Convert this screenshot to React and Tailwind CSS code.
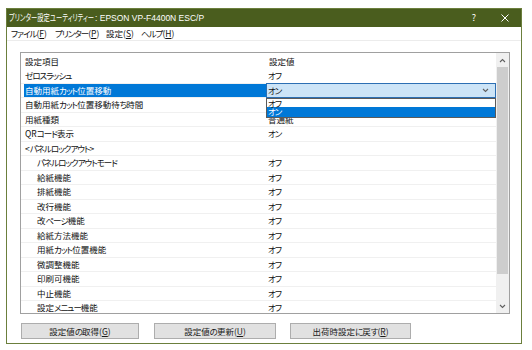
import React from "react";

const ROWS = [
  { label: "ゼロスラッシュ", value: "オフ" },
  { label: "自動用紙カット位置移動", value: "オン", selected: true },
  { label: "自動用紙カット位置移動待ち時間", value: "" },
  { label: "用紙種類", value: "普通紙" },
  { label: "QRコード表示", value: "オン" },
  { label: "<パネルロックアウト>", value: "" },
  { label: "パネルロックアウトモード", value: "オフ", indent: true },
  { label: "給紙機能", value: "オフ", indent: true },
  { label: "排紙機能", value: "オフ", indent: true },
  { label: "改行機能", value: "オフ", indent: true },
  { label: "改ページ機能", value: "オフ", indent: true },
  { label: "給紙方法機能", value: "オフ", indent: true },
  { label: "用紙カット位置機能", value: "オフ", indent: true },
  { label: "微調整機能", value: "オフ", indent: true },
  { label: "印刷可機能", value: "オフ", indent: true },
  { label: "中止機能", value: "オフ", indent: true },
  { label: "設定メニュー機能", value: "オフ", indent: true },
];

const MENUS = [
  ["ファイル", "F", "w-[44px]"],
  ["プリンター", "P", "w-[51px]"],
  ["設定", "S", "w-[35px]"],
  ["ヘルプ", "H", "w-[40px]"],
];

// kana in the original UI font are narrow, so squeeze kana runs a bit
function J({ text }) {
  return text.split(/([\u3040-\u30ff]+)/).map((part, i) =>
    /[\u3040-\u30ff]/.test(part) ? (
      <span key={i} className="tracking-[-1px]">{part}</span>
    ) : (
      <span key={i}>{part}</span>
    )
  );
}

function Chevron({ up }) {
  return (
    <svg width="7" height="5" viewBox="0 0 7 5" className="block">
      <polyline
        points={up ? "1,4 3.5,1.5 6,4" : "1,1 3.5,3.5 6,1"}
        fill="none"
        stroke="#606060"
        strokeWidth="1.1"
      />
    </svg>
  );
}

function Row({ row }) {
  return (
    <div className="flex h-[14.5px] border-b border-[#f0f0f0]">
      <div className="w-[245px] pl-[3px] flex">
        <div
          className={`flex-1 flex items-center whitespace-nowrap ${row.indent ? "pl-[13px]" : "pl-[1px]"} ${
            row.selected ? "bg-[#0078d7] text-white" : ""
          }`}
        >
          <J text={row.label} />
        </div>
      </div>
      <div className="w-[230px] relative">
        {row.selected ? (
          <>
            <div className="h-[15px] -mt-[0.5px] flex items-center justify-between border border-[#2c6fb3] bg-[#cce4f7] pl-[1px] pr-[6px]">
              <span><J text={row.value} /></span>
              <Chevron />
            </div>
            <div className="absolute left-0 top-[14.5px] w-full z-10 border border-[#5a5a5a] bg-white leading-[8px]">
              <div className="h-[8px] pl-[1px]"><J text="オフ" /></div>
              <div className="h-[9.5px] pl-[1px] bg-[#0078d7] text-white"><J text="オン" /></div>
            </div>
          </>
        ) : (
          <div className="h-full flex items-center pl-[2px]"><J text={row.value} /></div>
        )}
      </div>
    </div>
  );
}

function Btn({ label, k, w, ml }) {
  return (
    <div
      className={`${w} ${ml} h-[16px] flex items-center justify-center whitespace-nowrap bg-[#e1e1e1] border border-[#adadad] text-[#1a1a1a]`}
    >
      <J text={label} />(<span className="underline">{k}</span>)
    </div>
  );
}

export default function App() {
  return (
    <div className="w-[532px] h-[350px] bg-white pt-[8px] pl-[6px] text-[8.5px] text-[#111] [font-family:'Noto_Sans_CJK_JP',sans-serif] [font-feature-settings:'palt'_1] overflow-hidden">
      <div className="w-[516px] h-[336px] border border-[#6b7f3c] flex flex-col bg-white">
        {/* title bar */}
        <div className="h-[18px] bg-[#4a5d1e] text-white flex items-center pl-[2px] text-[9px]">
          <span className="inline-block w-[86px] shrink-0">
            <span className="inline-block origin-left scale-x-[0.7] whitespace-nowrap">プリンター設定ユーティリティー</span>
          </span>
          <span className="flex-1 whitespace-nowrap [font-family:'Liberation_Sans',sans-serif] text-[8.5px]">: EPSON VP-F4400N ESC/P</span>
          <span className="w-[10px] text-center mr-[22px]">?</span>
          <svg width="8" height="8" viewBox="0 0 8 8" className="mr-[12px]">
            <path d="M0.5 0.5 L7.5 7.5 M7.5 0.5 L0.5 7.5" stroke="white" strokeWidth="1" />
          </svg>
        </div>

        {/* menu bar */}
        <div className="h-[14px] flex items-center pl-[4px] border-b border-[#ececec]">
          {MENUS.map(([t, k, w]) => (
            <span key={k} className={`${w} shrink-0 whitespace-nowrap`}>
              <J text={t} />(<span className="underline">{k}</span>)
            </span>
          ))}
        </div>

        {/* list */}
        <div className="pl-[13px] pt-[11px]">
          <div className="w-[490px] h-[262px] border border-[#a0a0a0] flex">
            <div className="w-[475px] h-full overflow-hidden">
              <div className="h-[16px] flex items-center">
                <div className="w-[245px] pl-[4px]">設定項目</div>
                <div className="pl-[3px]">設定値</div>
              </div>
              {ROWS.map((r, i) => (
                <Row key={i} row={r} />
              ))}
            </div>
            <div className="w-[13px] h-full bg-[#f0f0f0] flex flex-col">
              <div className="h-[14px] flex items-center justify-center">
                <Chevron up />
              </div>
              <div className="h-[207px] mx-[1px] bg-[#cdcdcd]" />
              <div className="flex-1" />
              <div className="h-[14px] flex items-center justify-center">
                <Chevron />
              </div>
            </div>
          </div>

          {/* buttons */}
          <div className="flex mt-[9px]">
            <Btn label="設定値の取得" k="G" w="w-[118px]" ml="ml-[1px]" />
            <Btn label="設定値の更新" k="U" w="w-[122px]" ml="ml-[15px]" />
            <Btn label="出荷時設定に戻す" k="R" w="w-[121px]" ml="ml-[14px]" />
          </div>
        </div>
      </div>
    </div>
  );
}
